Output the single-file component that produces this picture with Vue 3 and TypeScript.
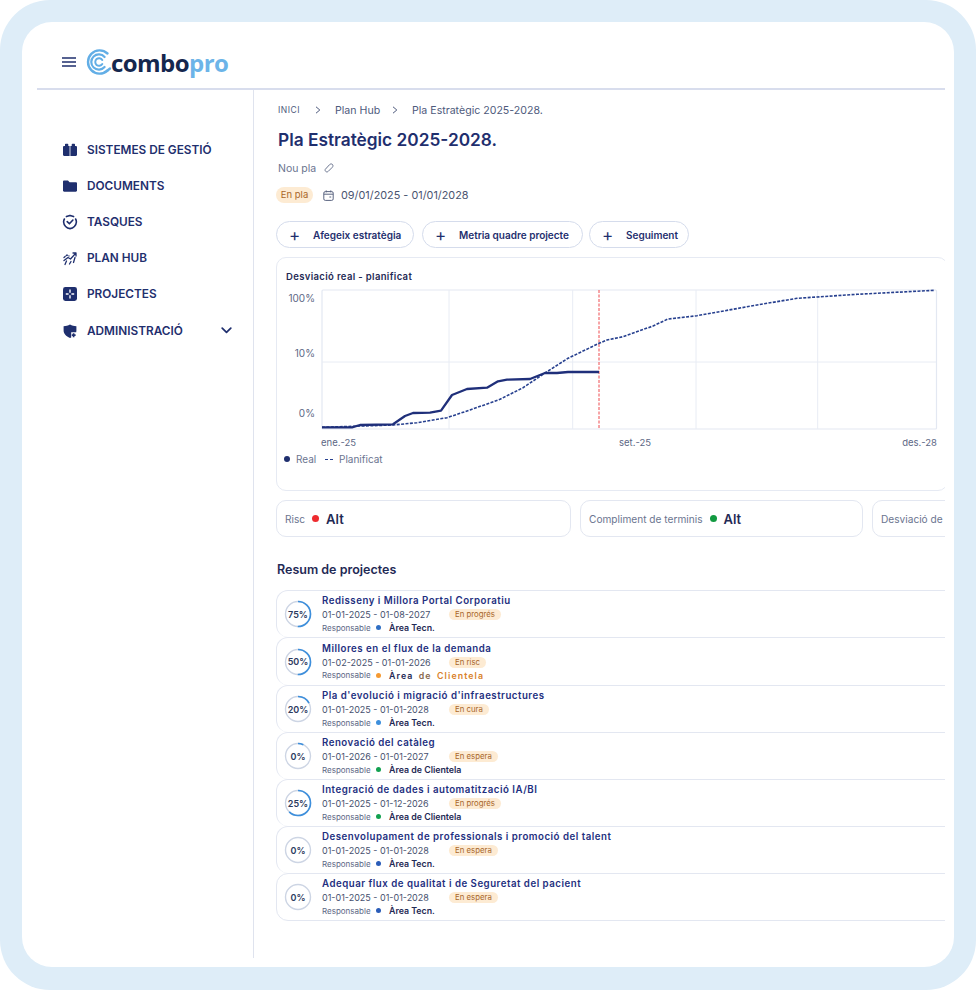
<script setup lang="ts">
interface Project {
  title: string
  dates: string
  status: string
  owner: string
  dot: string
  pct: string
  arc: number
  height: number
}

const nav = ['SISTEMES DE GESTIÓ', 'DOCUMENTS', 'TASQUES', 'PLAN HUB', 'PROJECTES', 'ADMINISTRACIÓ']

const projects: Project[] = [
  { title: 'Redisseny i Millora Portal Corporatiu', dates: '01-01-2025 - 01-08-2027', status: 'En progrés', owner: 'Àrea Tecn.', dot: '#2f6fc4', pct: '75%', arc: 0.5, height: 47 },
  { title: 'Millores en el flux de la demanda', dates: '01-02-2025 - 01-01-2026', status: 'En risc', owner: '', dot: '#f59a32', pct: '50%', arc: 0.5, height: 48 },
  { title: "Pla d'evolució i migració d'infraestructures", dates: '01-01-2025 - 01-01-2028', status: 'En cura', owner: 'Àrea Tecn.', dot: '#3d8fdc', pct: '20%', arc: 0.17, height: 47 },
  { title: 'Renovació del catàleg', dates: '01-01-2026 - 01-01-2027', status: 'En espera', owner: 'Àrea de Clientela', dot: '#12a150', pct: '0%', arc: 0.07, height: 47 },
  { title: 'Integració de dades i automatització IA/BI', dates: '01-01-2025 - 01-12-2026', status: 'En progrés', owner: 'Àrea de Clientela', dot: '#12a150', pct: '25%', arc: 0.62, height: 47 },
  { title: 'Desenvolupament de professionals i promoció del talent', dates: '01-01-2025 - 01-01-2028', status: 'En espera', owner: 'Àrea Tecn.', dot: '#2a5cb8', pct: '0%', arc: 0, height: 47 },
  { title: 'Adequar flux de qualitat i de Seguretat del pacient', dates: '01-01-2025 - 01-01-2028', status: 'En espera', owner: 'Àrea Tecn.', dot: '#2a5cb8', pct: '0%', arc: 0, height: 48 },
]

const circumference = 2 * Math.PI * 12.5
const dash = (arc: number): string => `${arc * circumference} ${circumference}`

const real = '322,427.3 352,427.3 360,425 393,424.3 405,416 413,413 430,412.7 441,410.7 452,395 467,389 487,387.7 498,381.3 507,379.7 530,379 545,373 557,373 568,372 599,372'
const planned = '322,427.3 393,425 417,422.7 447,417.7 470,410 500,399.3 523,387.7 547,371.7 568,358.3 599,343.3 607,340 623,336.7 653,326 668,319 697,315.7 757,305 797,298.3 817,297 857,294.3 935,290.3'
</script>

<template>
  <div class="frame">
    <div class="inner">
      <header class="header">
        <svg class="burger" width="14" height="10" viewBox="0 0 14 10">
          <path d="M0 1h14M0 5h14M0 9h14" stroke="#1f2f6e" stroke-width="1.6" fill="none" />
        </svg>
        <svg class="logo-mark" width="26" height="26" viewBox="0 0 26 26" fill="none" stroke="#62aee6" stroke-linecap="round">
          <path d="M21.5 4.5A11.6 11.6 0 1 0 21.5 21.5" stroke-width="2.4" />
          <path d="M18.6 8A7.6 7.6 0 1 0 18.6 18" stroke-width="2.2" />
          <path d="M16.3 11A3.8 3.8 0 1 0 16.3 15" stroke-width="2" />
          <path d="M21.5 21.5L24 19.5" stroke-width="2.4" />
        </svg>
        <span class="wordmark">combo<span class="wordmark-pro">pro</span></span>
      </header>

      <div class="body">
        <aside class="sidebar">
          <div v-for="(item, i) in nav" :key="item" class="nav-item">
            <svg class="nav-icon" width="16" height="16" viewBox="0 0 16 16" fill="#1f2f6e">
              <template v-if="i === 0">
                <path d="M1 5.2C1 4.5 1.5 4 2.2 4H3V2.4C3 2 3.3 1.7 3.7 1.7H5.6C6 1.7 6.3 2 6.3 2.4V4H7.6V14H2.2C1.5 14 1 13.5 1 12.8Z" />
                <path d="M8.4 4H9.7V2.4C9.7 2 10 1.7 10.4 1.7H12.3C12.7 1.7 13 2 13 2.4V4H13.8C14.5 4 15 4.5 15 5.2V12.8C15 13.5 14.5 14 13.8 14H8.4Z" />
              </template>
              <path v-else-if="i === 1" d="M1 3.6C1 2.9 1.5 2.4 2.2 2.4H6L7.6 4.2H13.8C14.5 4.2 15 4.7 15 5.4V12.6C15 13.3 14.5 13.8 13.8 13.8H2.2C1.5 13.8 1 13.3 1 12.6Z" />
              <g v-else-if="i === 2" fill="none" stroke="#1f2f6e" stroke-width="1.6" stroke-linecap="round" stroke-linejoin="round">
                <path d="M4.4 2.6L8 1.4L11.6 2.6M2.4 5A6.8 6.8 0 0 0 1.6 8C1.8 11.4 4.6 14.3 8 14.6C11.4 14.3 14.2 11.4 14.4 8A6.8 6.8 0 0 0 13.6 5" />
                <path d="M5.2 7.6L7.4 9.8L10.9 6" />
              </g>
              <g v-else-if="i === 3" fill="none" stroke="#1f2f6e" stroke-width="1.3" stroke-linecap="round" stroke-linejoin="round">
                <path d="M2 10.5L6 7.5L8.5 9L13.5 3.5M11 3H14V6" />
                <path d="M2 7.5L5 5L7 6" stroke-dasharray="1.5 1.5" />
                <path d="M3 14.5L4.5 11M7.5 14L9 11.5M11.5 12.5L13 7.5" />
              </g>
              <g v-else-if="i === 4">
                <rect x="1" y="1" width="14" height="14" rx="2.4" />
                <path d="M8 3.4V6.8M8 9.2V12.6M3.8 8H6.6M9.4 8H12.2" stroke="#fff" stroke-width="1.4" />
              </g>
              <g v-else>
                <path d="M8 1.4C10 2.6 12 3 14.4 3.2V7.6C14.4 8.2 14.3 8.7 14.2 9.2H9.2V14.5L8 14.9C4 13.6 1.6 10.8 1.6 7.6V3.2C4 3 6 2.6 8 1.4Z" />
                <path d="M11.6 10.2V14.2M9.8 12.2H13.6" stroke="#1f2f6e" stroke-width="1.7" />
              </g>
            </svg>
            <span class="nav-label">{{ item }}</span>
            <svg v-if="i === 5" class="chev" width="11" height="7" viewBox="0 0 11 7">
              <path d="M1.2 1.2L5.5 5.4L9.8 1.2" fill="none" stroke="#1f2f6e" stroke-width="1.7" stroke-linecap="round" stroke-linejoin="round" />
            </svg>
          </div>
        </aside>

        <main class="main">
          <nav class="crumbs">
            <span class="crumb-home">INICI</span>
            <svg class="crumb-sep" width="6" height="8" viewBox="0 0 6 8"><path d="M1 .8L4.8 4L1 7.2" fill="none" stroke="#4e5a7c" stroke-width="1" /></svg>
            <span class="crumb-hub">Plan Hub</span>
            <svg class="crumb-sep" width="6" height="8" viewBox="0 0 6 8"><path d="M1 .8L4.8 4L1 7.2" fill="none" stroke="#4e5a7c" stroke-width="1" /></svg>
            <span class="crumb-link">Pla Estratègic 2025-2028.</span>
          </nav>

          <h1 class="title">Pla Estratègic 2025-2028.</h1>

          <div class="subtitle">
            <span>Nou pla</span>
            <svg width="10" height="10" viewBox="0 0 10 10" fill="none" stroke="#6b7590" stroke-width="1">
              <path d="M1.4 6.2L5.6 1.6C6.4.8 7.6.7 8.4 1.4C9.2 2.2 9.1 3.4 8.4 4.2L4.2 8.4C3.5 9.1 2.4 9.1 1.7 8.4C1 7.8.9 6.8 1.4 6.2Z" />
            </svg>
          </div>

          <div class="status-row">
            <span class="pill plan-pill">En pla</span>
            <svg width="11" height="11" viewBox="0 0 11 11" fill="none" stroke="#5a6480" stroke-width="1">
              <rect x=".8" y="1.6" width="9.4" height="8.8" rx="1.5" />
              <path d="M.8 4.2H10.2M3.2.4V2.4M7.8.4V2.4M6.4 7H8.2" />
            </svg>
            <span class="dates">09/01/2025 - 01/01/2028</span>
          </div>

          <div class="actions">
            <button class="action action-a"><span class="plus">+</span>Afegeix estratègia</button>
            <button class="action action-b"><span class="plus">+</span>Metria quadre projecte</button>
            <button class="action action-c"><span class="plus">+</span>Seguiment</button>
          </div>

          <section class="chart-card">
            <div class="chart-title">Desviació real - planificat</div>
            <svg class="chart" width="670" height="166" viewBox="276 284 670 166">
              <rect x="322" y="290" width="614.5" height="139" fill="#fff" stroke="#e3e8f2" stroke-width="1.2" rx="1" />
              <path d="M449 290V429M572.7 290V429M696 290V429M817.7 290V429M322 362H936" stroke="#e8ecf4" stroke-width="1" fill="none" />
              <line x1="599" y1="290" x2="599" y2="429" stroke="#ee4a4f" stroke-width="1" stroke-dasharray="3 1.5" />
              <polyline :points="planned" fill="none" stroke="#27408f" stroke-width="1.6" stroke-dasharray="3 1.4" />
              <polyline :points="real" fill="none" stroke="#1f2f7a" stroke-width="2.3" stroke-linejoin="round" />
              <text class="axis" x="315" y="302" text-anchor="end">100%</text>
              <text class="axis" x="315" y="357" text-anchor="end">10%</text>
              <text class="axis" x="315" y="417" text-anchor="end">0%</text>
              <text class="axis-x" x="321" y="446">ene.-25</text>
              <text class="axis-x" x="619" y="446">set.-25</text>
              <text class="axis-x" x="937" y="446" text-anchor="end">des.-28</text>
            </svg>
            <div class="legend">
              <span class="legend-dot"></span>
              <span class="legend-real">Real</span>
              <span class="legend-dash"></span>
              <span>Planificat</span>
            </div>
          </section>

          <div class="kpis">
            <div class="kpi kpi-a"><span class="kpi-label">Risc</span><span class="kpi-dot red"></span><strong>Alt</strong></div>
            <div class="kpi kpi-b"><span class="kpi-label">Compliment de terminis</span><span class="kpi-dot green"></span><strong>Alt</strong></div>
            <div class="kpi kpi-c"><span class="kpi-label">Desviació de</span></div>
          </div>

          <h2 class="section-title">Resum de projectes</h2>

          <div class="rows">
            <article v-for="p in projects" :key="p.title" class="row" :style="{ height: p.height + 'px' }">
              <div class="ring">
                <svg width="28" height="28" viewBox="0 0 28 28">
                  <circle cx="14" cy="14" r="12.5" fill="none" stroke="#cdd5e4" stroke-width="1.4" />
                  <circle cx="14" cy="14" r="12.5" fill="none" stroke="#3d8fdc" stroke-width="1.6" :stroke-dasharray="dash(p.arc)" transform="rotate(-90 14 14)" />
                </svg>
                <span class="ring-label">{{ p.pct }}</span>
              </div>
              <div class="row-text">
                <div class="row-title">{{ p.title }}</div>
                <div class="row-meta">
                  <span class="row-dates">{{ p.dates }}</span>
                  <span class="pill row-pill">{{ p.status }}</span>
                </div>
                <div class="row-owner">
                  <span class="owner-label">Responsable</span>
                  <span class="owner-dot" :style="{ background: p.dot }"></span>
                  <span v-if="p.owner" class="owner-name">{{ p.owner }}</span>
                  <span v-else class="owner-name owner-wide">Àrea <span class="tone-a">de</span> <span class="tone-b">Clientela</span></span>
                </div>
              </div>
            </article>
          </div>
        </main>
      </div>
    </div>
  </div>
</template>

<style>
html, body { margin: 0; background: #fff; }
</style>

<style scoped>
* { box-sizing: border-box; }
.frame {
  width: 976px; height: 990px; padding: 22px 22px 23px;
  background: #deedf8; border-radius: 50px;
  font-family: Inter, "Noto Sans", sans-serif; color: #1f2f6e; overflow: hidden;
}
.inner {
  height: 100%; padding: 0 9px 9px 15px; background: #fff; border-radius: 30px;
  display: flex; flex-direction: column;
}
.header {
  flex: none; height: 68px; padding: 14px 0 0 25px; border-bottom: 2px solid #d8dded;
  display: flex; align-items: center;
}
.burger { flex: none; }
.logo-mark { margin-left: 10px; flex: none; }
.wordmark {
  margin-left: -1px; font-family: "Open Sans", sans-serif; font-size: 24px; font-weight: 700;
  letter-spacing: -0.55px; color: #14274e;
}
.wordmark-pro { color: #6cb4e8; }
.body { flex: 1; min-height: 0; display: flex; }
.sidebar { flex: none; width: 217px; padding: 42px 0 0 25px; border-right: 1px solid #dfe3ee; }
.nav-item { height: 36.1px; display: flex; align-items: center; position: relative; }
.nav-icon { flex: none; margin-right: 9px; }
.nav-label { font-size: 11.8px; font-weight: 600; color: #1f2f6e; white-space: nowrap; }
.chev { position: absolute; left: 159px; top: 15px; }
.main { flex: 1; min-width: 0; padding-left: 22px; overflow: hidden; }
.crumbs {
  margin: 13px 0 0 2px; height: 14px; display: flex; align-items: center;
  font-size: 10.6px; color: #4e5a7c; white-space: nowrap;
}
.crumb-home { font-size: 8.5px; letter-spacing: .5px; width: 37px; }
.crumb-sep { margin-right: 14px; flex: none; }
.crumb-hub { width: 43px; margin-right: 14px; }
.title { margin: 11px 0 0 2px; height: 24px; font-size: 17.3px; line-height: 24px; font-weight: 600; color: #1f2f6e; }
.subtitle {
  margin: 9px 0 0 2px; height: 14px; display: flex; align-items: center; gap: 8px;
  font-size: 10.5px; color: #6b7590;
}
.status-row { margin-top: 12px; height: 16px; display: flex; align-items: center; }
.pill { background: #fdebd3; color: #a8662a; border-radius: 8px; white-space: nowrap; }
.plan-pill { width: 37px; height: 16px; margin-right: 10px; font-size: 9.5px; line-height: 16px; text-align: center; }
.dates { margin-left: 7px; font-size: 10.85px; color: #4a5470; }
.actions { margin-top: 18px; display: flex; height: 27px; }
.action {
  height: 27px; padding: 0 0 0 12px; border: 1px solid #d5dcec; border-radius: 14px; background: #fff;
  font: 600 10px Inter, "Noto Sans", sans-serif; color: #1f2f6e; display: flex; align-items: center;
  white-space: nowrap;
}
.plus { width: 24px; font-size: 17px; font-weight: 400; text-align: left; }
.action-a { width: 138px; margin-right: 8px; }
.action-b { width: 161px; margin-right: 6px; }
.action-c { width: 100px; }
.chart-card {
  margin-top: 9px; width: 672px; height: 234px; padding: 13px 0 0 9px;
  border: 1px solid #e6eaf3; border-radius: 10px;
}
.chart-title { height: 11px; font-size: 9.5px; line-height: 11px; font-weight: 600; letter-spacing: .35px; color: #1f2a55; }
.chart { display: block; margin: 2px 0 0 -10px; }
.axis { font-size: 10px; fill: #5c6785; }
.axis-x { font-size: 9.5px; fill: #5c6785; }
.legend { margin-top: 2px; display: flex; align-items: center; font-size: 10px; color: #6b7590; height: 14px; }
.legend-dot { width: 6px; height: 6px; border-radius: 50%; background: #1f2f6e; margin-right: 6px; margin-left: -2px; }
.legend-real { width: 29px; }
.legend-dash { width: 8px; border-top: 1.5px dashed #27408f; margin-right: 6px; }
.kpis { margin-top: 9px; display: flex; gap: 9px; height: 37px; }
.kpi {
  flex: none; height: 37px; padding-left: 8px; border: 1px solid #e3e7f1; border-radius: 10px;
  display: flex; align-items: center; white-space: nowrap; overflow: hidden;
}
.kpi-a { width: 295px; }
.kpi-b { width: 283px; }
.kpi-c { width: 100px; }
.kpi-label { font-size: 10.15px; color: #6b7590; }
.kpi-dot { width: 7px; height: 7px; border-radius: 50%; margin: 0 7px; }
.kpi strong { font-size: 13px; font-weight: 600; color: #1f2a55; }
.red { background: #ee2b2f; }
.green { background: #129a41; }
.section-title { margin: 25px 0 0 1px; height: 16px; font-size: 12.5px; line-height: 16px; font-weight: 600; color: #1f2a55; }
.rows { margin-top: 12px; width: 680px; }
.row {
  display: flex; align-items: center; padding-left: 7px; border: 1px solid #e3e7f1; border-bottom-width: 0;
  border-radius: 12px 0 0 12px; white-space: nowrap;
}
.row:last-child { border-bottom-width: 1px; }
.ring { flex: none; width: 28px; height: 28px; position: relative; margin-right: 10px; }
.ring svg { display: block; }
.ring-label {
  position: absolute; inset: 0; display: flex; align-items: center; justify-content: center;
  font-size: 9px; font-weight: 600; color: #2c3a5e;
}
.row-text { min-width: 0; display: flex; flex-direction: column; gap: 2px; }
.row-title { font-size: 9.7px; line-height: 12px; font-weight: 600; letter-spacing: .5px; color: #1e2f80; }
.row-meta { display: flex; align-items: center; height: 11px; }
.row-dates { width: 127px; font-size: 9px; color: #46506e; }
.row-pill { padding: 0 6px; height: 11px; line-height: 11px; font-size: 7.8px; border-radius: 6px; }
.row-owner { display: flex; align-items: center; height: 11px; }
.owner-label { width: 54px; font-size: 8px; color: #5c6785; }
.owner-dot { width: 5px; height: 5px; border-radius: 50%; margin-right: 8px; }
.owner-name { font-size: 8.8px; font-weight: 600; color: #1f2a55; }
.owner-wide { letter-spacing: 1.1px; word-spacing: 2px; }
.tone-a { color: #8a6a50; }
.tone-b { color: #d9822b; }
</style>
